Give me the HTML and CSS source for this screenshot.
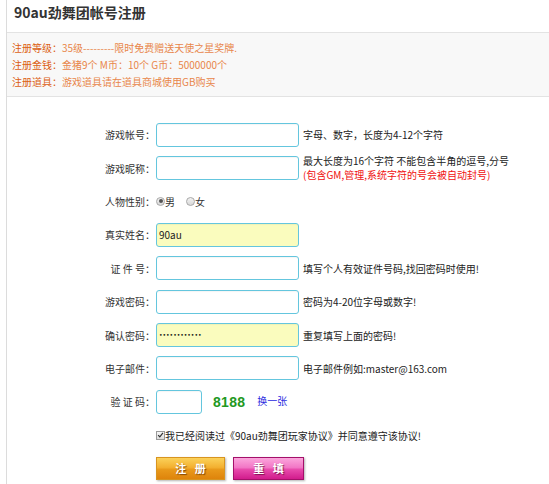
FILE: index.html
```html
<!DOCTYPE html>
<html lang="zh-CN">
<head>
<meta charset="utf-8">
<title>90au劲舞团帐号注册</title>
<link rel="stylesheet" href="styles.css">
</head>
<body>
<div class="page">
  <h1 class="title">90au劲舞团帐号注册</h1>
  <div class="info">
    <p><span class="k">注册等级：</span><span class="v">35级---------限时免费赠送天使之星奖牌.</span></p>
    <p><span class="k">注册金钱：</span><span class="v">金猪9个 M币：10个 G币：5000000个</span></p>
    <p><span class="k">注册道具：</span><span class="v">游戏道具请在道具商城使用GB购买</span></p>
  </div>
  <div class="form">
    <div class="row">
      <label class="lab">游戏帐号：</label>
      <span class="inp"></span>
      <span class="hint">字母、数字，长度为4-12个字符</span>
    </div>
    <div class="row">
      <label class="lab">游戏昵称：</label>
      <span class="inp"></span>
      <span class="hint two"><span class="line">最大长度为16个字符 不能包含半角的逗号,分号</span><span class="line red">(包含GM,管理,系统字符的号会被自动封号)</span></span>
    </div>
    <div class="row">
      <label class="lab">人物性别：</label>
      <span class="radios"><span class="radio on"></span>男<span class="radio second"></span>女</span>
    </div>
    <div class="row">
      <label class="lab">真实姓名：</label>
      <span class="inp yellow">90au</span>
    </div>
    <div class="row">
      <label class="lab">证 件 号：</label>
      <span class="inp"></span>
      <span class="hint">填写个人有效证件号码,找回密码时使用!</span>
    </div>
    <div class="row">
      <label class="lab">游戏密码：</label>
      <span class="inp"></span>
      <span class="hint">密码为4-20位字母或数字!</span>
    </div>
    <div class="row">
      <label class="lab">确认密码：</label>
      <span class="inp yellow dots">••••••••••••</span>
      <span class="hint">重复填写上面的密码!</span>
    </div>
    <div class="row">
      <label class="lab">电子邮件：</label>
      <span class="inp"></span>
      <span class="hint">电子邮件例如:master@163.com</span>
    </div>
    <div class="row">
      <label class="lab">验 证 码：</label>
      <span class="inp small"></span>
      <span class="code">8188</span>
      <a class="swap">换一张</a>
    </div>
    <div class="row">
      <span class="lab"></span>
      <span class="agree"><span class="check"><svg viewBox="0 0 8 8" width="8" height="8"><path d="M1.3 4.2 L3.2 6.1 L6.8 1.6" fill="none" stroke="#333" stroke-width="1.4"/></svg></span>我已经阅读过《90au劲舞团玩家协议》并同意遵守该协议!</span>
    </div>
    <div class="row">
      <span class="lab"></span>
      <span class="btns"><span class="btn orange">注 册</span><span class="btn pink">重 填</span></span>
    </div>
  </div>
</div>
</body>
</html>
```
FILE: styles.css
```css
html, body {
  margin: 0;
  padding: 0;
  background: #fff;
}
body {
  font-family: "Noto Sans CJK SC", "Microsoft YaHei", sans-serif;
  font-size: 10px;
  color: #333;
}
.page {
  margin-left: 6px;
  border-left: 1px solid #dcdcdc;
  min-height: 484px;
}
.title {
  margin: 0;
  height: 32px;
  line-height: 24px;
  padding-left: 7px;
  font-size: 14px;
  font-weight: bold;
  color: #333;
}
.info {
  background: #f8f8f8;
  border-top: 1px solid #e3e3e3;
  border-bottom: 1px solid #e3e3e3;
  padding: 6px 0 6px 5px;
  height: 51px;
}
.info p {
  margin: 0;
  line-height: 17px;
}
.info .k {
  color: #dc6014;
}
.info .v {
  color: #e8864a;
}
.form {
  margin-top: 21px;
}
.row {
  display: flex;
  align-items: center;
  height: 33.4px;
}
.lab {
  width: 148px;
  flex: none;
  text-align: right;
  color: #333;
}
.inp {
  box-sizing: border-box;
  margin-left: 1px;
  width: 143px;
  height: 24px;
  flex: none;
  border: 1px solid #64c6de;
  border-radius: 3px;
  background: #fff;
  line-height: 22px;
  padding-left: 2px;
  color: #222;
  box-shadow: inset 0 1px 1px rgba(0,0,0,0.04);
}
.inp.yellow {
  background: #fafcbe;
}
.inp.dots {
  font-family: "DejaVu Sans", sans-serif;
  font-size: 6px;
  letter-spacing: 0px;
  color: #111;
}
.inp.small {
  width: 46px;
}
.hint {
  margin-left: 4px;
  color: #222;
}
.hint.two {
  display: flex;
  flex-direction: column;
}
.hint.two .line {
  display: block;
  line-height: 14.5px;
}
.red {
  color: #f01010;
}
.radios {
  margin-left: 1px;
  display: flex;
  align-items: center;
  color: #333;
}
.radio {
  box-sizing: border-box;
  width: 9px;
  height: 9px;
  border-radius: 50%;
  border: 1px solid #a8a8a8;
  background: linear-gradient(#f2f2f2, #d8d8d8);
  position: relative;
}
.radio.on::after {
  content: "";
  position: absolute;
  left: 1.5px;
  top: 1.5px;
  width: 4px;
  height: 4px;
  border-radius: 50%;
  background: #555;
}
.radio.second {
  margin-left: 11px;
}
.code {
  margin-left: 11px;
  font-family: "Liberation Sans", Arial, sans-serif;
  font-weight: bold;
  font-size: 14px;
  color: #229922;
  letter-spacing: 0.3px;
}
.swap {
  margin-left: 12px;
  color: #2a2ae0;
  margin-top: -3px;
}
.agree {
  margin-left: 1px;
  display: flex;
  align-items: center;
  color: #222;
}
.check {
  box-sizing: border-box;
  width: 9px;
  height: 9px;
  border: 1px solid #9a9a9a;
  background: linear-gradient(#f6f6f6, #dcdcdc);
  display: inline-flex;
  align-items: center;
  justify-content: center;
}
.check svg {
  display: block;
}
.btns {
  margin-left: 1px;
  display: flex;
  gap: 8px;
}
.btn {
  box-sizing: border-box;
  height: 23px;
  line-height: 21px;
  text-align: center;
  color: #fff;
  font-weight: bold;
  font-size: 11px;
  letter-spacing: 3px;
  text-indent: 3px;
  text-shadow: 1px 1px 1px rgba(90,40,0,0.7);
  box-shadow: 1px 1px 2px rgba(0,0,0,0.3);
}
.btn.orange {
  width: 69px;
  border: 1px solid #d89420;
  background: linear-gradient(#fbd15a 0%, #f3b030 45%, #e9991a 55%, #de840c 100%);
}
.btn.pink {
  width: 71px;
  border: 1px solid #a4106a;
  background: linear-gradient(#fba6dc 0%, #f277c6 45%, #e84aac 55%, #d11c8c 100%);
  text-shadow: 1px 1px 1px rgba(90,0,50,0.7);
}
```
